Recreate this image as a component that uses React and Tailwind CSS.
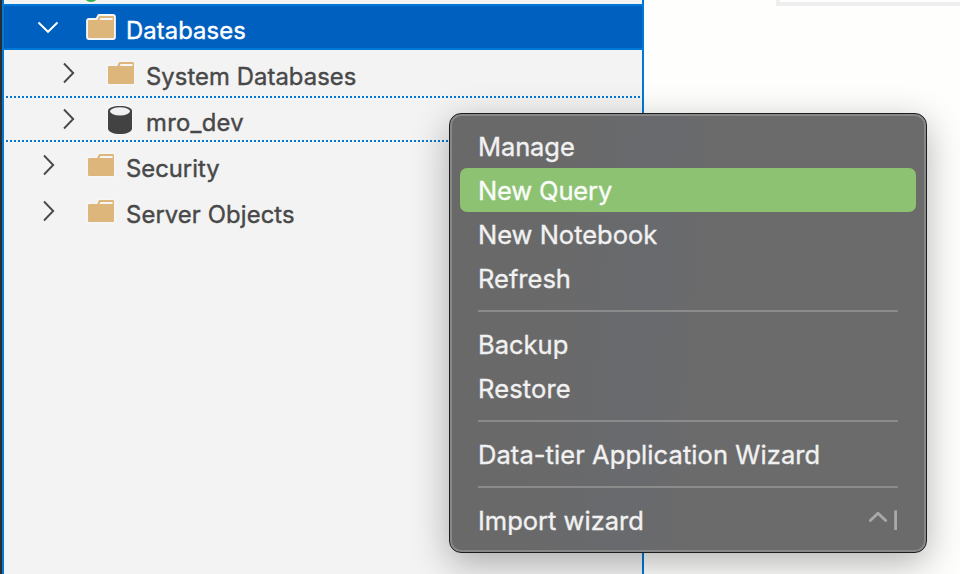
const FONT = 'font-[Inter,"Liberation_Sans",sans-serif]';

function Chevron({ open, className }) {
  return (
    <svg width="24" height="24" viewBox="0 0 24 24" fill="none" stroke="currentColor" strokeWidth="1.9" className={className}>
      <path d={open ? 'M2.5 7.5 L12 16.8 L21.5 7.5' : 'M8 2.5 L17.2 12 L8 21.5'} />
    </svg>
  );
}

function Folder({ selected }) {
  return (
    <svg width="32" height="28" viewBox="0 0 32 28" className="shrink-0">
      <path
        d="M3 5 H10.5 L12.5 1 H27 Q29 1 29 3 V23 Q29 25 27 25 H3 Q1 25 1 23 V7 Q1 5 3 5 Z"
        fill="#f6f6f6"
        stroke="#f6f6f6"
        strokeWidth={selected ? 1.8 : 0.5}
        strokeLinejoin="round"
      />
      <path
        fillRule="evenodd"
        d="M3.3 6 H11.2 L12.8 2.6 Q13.1 2 13.8 2 H27 Q28 2 28 3 V23 Q28 24 27 24 H3 Q2 24 2 23 V7.2 Q2 6 3.3 6 Z M13.6 6 H26.6 V4 H14.5 Z"
        fill="#dcb67a"
      />
    </svg>
  );
}

function Database() {
  return (
    <svg width="32" height="32" viewBox="0 0 32 32" className="shrink-0">
      <path d="M2 7 C2 3.6 7.5 2 14 2 S26 3.6 26 7 V24.5 C26 28 20.5 30 14 30 S2 28 2 24.5 Z" fill="#424242" stroke="#f6f6f6" strokeWidth="1.6" paintOrder="stroke" />
      <ellipse cx="14" cy="7.3" rx="10" ry="4.1" fill="#f0eff1" />
    </svg>
  );
}

function MenuItem({ label, spacing = '', active, shortcut }) {
  return (
    <div className={`flex h-[44px] items-center rounded-[7px] px-[18px] ${active ? 'bg-[#8cc272] text-[#fafcf9]' : 'text-[#f1f1f1]'}`}>
      <span className={`pt-[2px] text-[25.5px] leading-[44px] whitespace-pre [-webkit-text-stroke:0.35px_currentColor] ${spacing}`}>{label}</span>
      {shortcut && (
        <svg width="30" height="24" viewBox="0 0 30 24" fill="none" stroke="#a9a9a9" strokeWidth="2.8" className="ml-auto">
          <path d="M2.3 12.6 L10 5.2 L17.7 12.6" strokeLinejoin="round" strokeLinecap="round" />
          <path d="M27.6 2.4 V22" />
        </svg>
      )}
    </div>
  );
}

function Separator() {
  return <div className="mx-[18px] my-[10px] h-[2px] bg-[#8b8b8c]" />;
}

function Row({ indent, label, spacing = '', open, db, className = 'text-[#484848]' }) {
  return (
    <div className={`flex h-[46px] ${indent} ${className}`}>
      <Chevron open={open} className="mt-[11px] shrink-0" />
      <div className={`ml-[26px] w-[40px] shrink-0 ${db ? 'mt-[8px]' : 'mt-[10px]'}`}>
        {db ? <Database /> : <Folder selected={open} />}
      </div>
      <span className={`pt-[4px] text-[23.8px] leading-[46px] whitespace-pre [-webkit-text-stroke:0.4px_currentColor] ${spacing}`}>{label}</span>
    </div>
  );
}

export default function App() {
  return (
    <div className={`relative flex h-[574px] w-[960px] overflow-hidden bg-[#fefefd] ${FONT}`}>
      <div className="w-[2px] bg-[#2c2c2c]" />
      <div className="relative w-[642px] overflow-hidden border-x-2 border-[#0078d7] bg-[#f3f3f3] pt-[4px]">
        <div className="absolute left-[79px] top-[-14px] size-[16px] rounded-full bg-[#37b24a]" />
        <div className="relative h-[46px] border-y-2 border-[#0078d7] bg-[#0060c0]">
          <div className="-mt-[2px]">
            <Row indent="pl-[32px]" label="Databases" spacing="tracking-[0.1px]" open className="text-white" />
          </div>
        </div>
        <Row indent="pl-[52px]" label="System Databases" spacing="tracking-[0.08px]" />
        <div className="relative">
          <Row indent="pl-[52px]" label="mro_dev" spacing="tracking-[0.3px]" db />
          <div className="absolute inset-x-[2px] top-0 h-[2px] bg-[repeating-linear-gradient(90deg,#0078d7_0_2px,transparent_2px_4px)]" />
          <div className="absolute inset-x-[2px] bottom-0 h-[2px] bg-[repeating-linear-gradient(90deg,#0078d7_0_2px,transparent_2px_4px)]" />
        </div>
        <Row indent="pl-[32px]" label="Security" />
        <Row indent="pl-[32px]" label="Server Objects" spacing="tracking-[0.12px]" />
      </div>
      <div className="ml-auto h-[6px] w-[184px] border-b-4 border-l-4 border-[#eeeeee] bg-white" />

      <div className="absolute left-[449px] top-[113px] h-[440px] w-[478px] rounded-[12px] border border-[#1d1d1d] bg-[linear-gradient(95deg,#696969_20%,#696a6d_38%,#696a6d_44%,#6b6b6b_55%)] p-[10px] shadow-[inset_0_0_0_2px_#888888,0_10px_36px_rgba(0,0,0,0.3)]">
        <MenuItem label="Manage" spacing="tracking-[-0.1px]" />
        <MenuItem label="New Query" spacing="tracking-[-0.15px]" active />
        <MenuItem label="New Notebook" />
        <MenuItem label="Refresh" />
        <Separator />
        <MenuItem label="Backup" />
        <MenuItem label="Restore" spacing="tracking-[0.15px]" />
        <Separator />
        <MenuItem label="Data-tier Application Wizard" spacing="tracking-[0.07px]" />
        <Separator />
        <MenuItem label="Import wizard" shortcut />
      </div>
    </div>
  );
}
